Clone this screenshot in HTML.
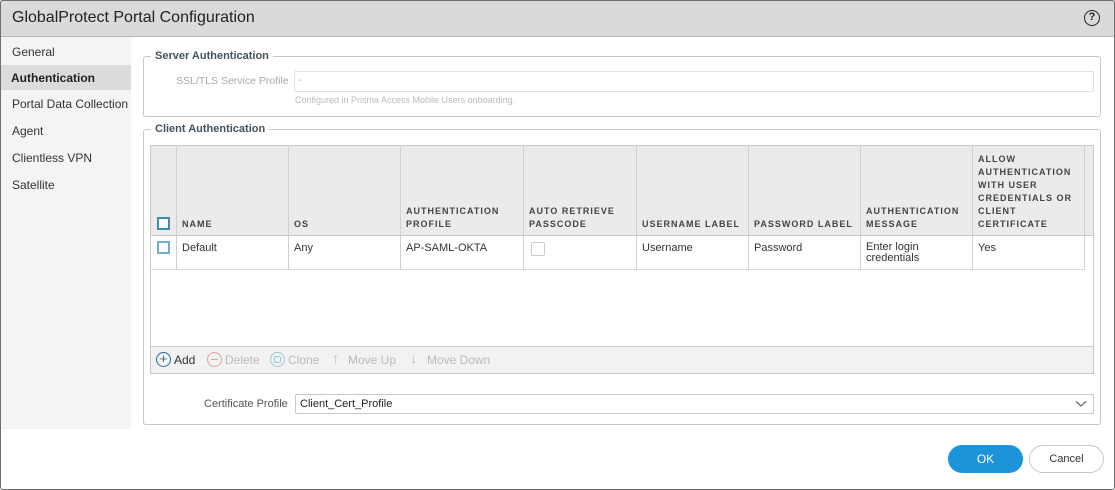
<!DOCTYPE html>
<html><head><style>
*{box-sizing:border-box;margin:0;padding:0}
body{width:1115px;height:490px;background:#fff;font-family:"Liberation Sans",sans-serif;position:relative;overflow:hidden;color:#333}
.a{position:absolute}
#dlg{left:0;top:0;width:1115px;height:490px;overflow:hidden}
.t{font-size:11px}
.hd{font-size:9px;font-weight:bold;letter-spacing:1px;color:#444;line-height:13px}
.vl{position:absolute;top:0;width:1px;background:#d0d0d0}
.cb{position:absolute;width:13px;height:13px;border:2px solid #3d8bb5;background:#fff}
</style></head><body>
<div id="dlg" class="a">
<div class="a" style="left:0;top:0;width:1115px;height:37px;background:#d8dadc;border-bottom:1px solid #b8babc"></div>
<div class="a" style="left:12px;top:9px;font-size:16px;color:#222">GlobalProtect Portal Configuration</div>
<div class="a" style="left:1084px;top:10px;width:16px;height:16px;border:1.5px solid #222;border-radius:50%;font-size:11px;font-weight:bold;text-align:center;line-height:13px;color:#222">?</div>
<div class="a" style="left:0;top:37px;width:131px;height:392px;background:#f4f4f4"></div>
<div class="a" style="left:0;top:65px;width:131px;height:25px;background:#dcdcdc"></div>
<div class="a t" style="left:12px;top:45px;font-size:12px">General</div>
<div class="a t" style="left:11px;top:71px;font-size:12px;font-weight:bold;color:#222">Authentication</div>
<div class="a t" style="left:12px;top:97px;font-size:12px">Portal Data Collection</div>
<div class="a t" style="left:12px;top:124px;font-size:12px">Agent</div>
<div class="a t" style="left:12px;top:151px;font-size:12px">Clientless VPN</div>
<div class="a t" style="left:12px;top:178px;font-size:12px">Satellite</div>

<div class="a" style="left:143px;top:56px;width:958px;height:61px;border:1px solid #c8c8c8;border-radius:3px"></div>
<div class="a t" style="left:151px;top:50px;background:#fff;padding:0 4px;font-weight:bold;color:#45525c">Server Authentication</div>
<div class="a" style="left:176px;top:75px;font-size:10.5px;color:#aaa">SSL/TLS Service Profile</div>
<div class="a" style="left:294px;top:71px;width:800px;height:21px;border:1px solid #e0e0e0;border-radius:2px;font-size:10px;color:#bbb;padding:3px 4px">-</div>
<div class="a" style="left:295px;top:95px;font-size:9px;color:#bbb">Configured in Prisma Access Mobile Users onboarding.</div>

<div class="a" style="left:143px;top:129px;width:958px;height:296px;border:1px solid #c8c8c8;border-radius:3px"></div>
<div class="a t" style="left:151px;top:123px;background:#fff;padding:0 4px;font-weight:bold;color:#45525c">Client Authentication</div>

<div class="a" style="left:150px;top:145px;width:944px;height:229px;border:1px solid #c8c8c8;background:#fff">
 <div class="a" style="left:0;top:0;width:942px;height:90px;background:#ebebeb;border-bottom:1px solid #c8c8c8"></div>
 <div class="a" style="left:0;top:90px;width:934px;height:34px;border-bottom:1px solid #ddd"></div>
 <div class="vl" style="left:25px;height:124px"></div>
 <div class="vl" style="left:137px;height:124px"></div>
 <div class="vl" style="left:249px;height:124px"></div>
 <div class="vl" style="left:372px;height:124px"></div>
 <div class="vl" style="left:485px;height:124px"></div>
 <div class="vl" style="left:597px;height:124px"></div>
 <div class="vl" style="left:709px;height:124px"></div>
 <div class="vl" style="left:821px;height:124px"></div>
 <div class="vl" style="left:933px;height:124px"></div>
 <div class="cb" style="left:6px;top:71px"></div>
 <div class="cb" style="left:6px;top:95px;border-color:#6fb0d0"></div>
 <div class="a hd" style="left:31px;top:72px">NAME</div>
 <div class="a hd" style="left:143px;top:72px">OS</div>
 <div class="a hd" style="left:255px;top:59px">AUTHENTICATION<br>PROFILE</div>
 <div class="a hd" style="left:378px;top:59px">AUTO RETRIEVE<br>PASSCODE</div>
 <div class="a hd" style="left:491px;top:72px">USERNAME LABEL</div>
 <div class="a hd" style="left:603px;top:72px">PASSWORD LABEL</div>
 <div class="a hd" style="left:715px;top:59px">AUTHENTICATION<br>MESSAGE</div>
 <div class="a hd" style="left:827px;top:7px">ALLOW<br>AUTHENTICATION<br>WITH USER<br>CREDENTIALS OR<br>CLIENT<br>CERTIFICATE</div>
 <div class="a t" style="left:31px;top:96px">Default</div>
 <div class="a t" style="left:143px;top:96px">Any</div>
 <div class="a t" style="left:255px;top:96px">AP-SAML-OKTA</div>
 <div class="a" style="left:380px;top:96px;width:14px;height:14px;border:1px solid #ccc;border-radius:2px"></div>
 <div class="a t" style="left:491px;top:96px">Username</div>
 <div class="a t" style="left:603px;top:96px">Password</div>
 <div class="a t" style="left:715px;top:96px;line-height:11px">Enter login<br>credentials</div>
 <div class="a t" style="left:827px;top:96px">Yes</div>
 <div class="a" style="left:0;top:200px;width:942px;height:27px;background:#f2f2f2;border-top:1px solid #ccc"></div>
 <div class="a" style="left:5px;top:206px;width:15px;height:15px;border:1px solid #2a6f96;border-radius:50%;text-align:center;line-height:12px;font-size:13px;color:#2a6f96">+</div>
 <div class="a" style="left:23px;top:207px;font-size:12px;color:#333">Add</div>
 <div class="a" style="left:56px;top:206px;width:15px;height:15px;border:1px solid #e4a0a0;border-radius:50%;"><div class="a" style="left:3px;top:6px;width:7px;height:1px;background:#e4a0a0"></div></div>
 <div class="a" style="left:74px;top:207px;font-size:12px;color:#bbb">Delete</div>
 <div class="a" style="left:119px;top:206px;width:15px;height:15px;border:1px solid #9cc6dc;border-radius:50%"><div class="a" style="left:3px;top:3px;width:7px;height:7px;border:1px solid #9cc6dc;border-radius:2px"></div></div>
 <div class="a" style="left:137px;top:207px;font-size:12px;color:#bbb">Clone</div>
 <div class="a" style="left:181px;top:204px;font-size:14px;color:#bbb">↑</div>
 <div class="a" style="left:197px;top:207px;font-size:12px;color:#bbb">Move Up</div>
 <div class="a" style="left:259px;top:204px;font-size:14px;color:#bbb">↓</div>
 <div class="a" style="left:276px;top:207px;font-size:12px;color:#bbb">Move Down</div>
</div>

<div class="a t" style="left:204px;top:398px;color:#555">Certificate Profile</div>
<div class="a" style="left:295px;top:394px;width:799px;height:20px;border:1px solid #c8c8c8;border-radius:2px;font-size:11px;color:#222;padding:3px 4px">Client_Cert_Profile</div>
<svg class="a" style="left:1075px;top:400px" width="12" height="8"><path d="M1 1.5 L6 6 L11 1.5" stroke="#666" fill="none" stroke-width="1.2"/></svg>

<div class="a" style="left:948px;top:445px;width:75px;height:28px;background:#1d94d8;border-radius:14px;color:#fff;font-size:12px;text-align:center;line-height:28px">OK</div>
<div class="a" style="left:1029px;top:445px;width:75px;height:28px;border:1px solid #c8c8c8;border-radius:14px;color:#333;font-size:11px;text-align:center;line-height:26px">Cancel</div>
<div class="a" style="left:0;top:0;width:1115px;height:490px;border:1px solid #6e6e6e;border-radius:3px;pointer-events:none"></div>
</div>
</body></html>
